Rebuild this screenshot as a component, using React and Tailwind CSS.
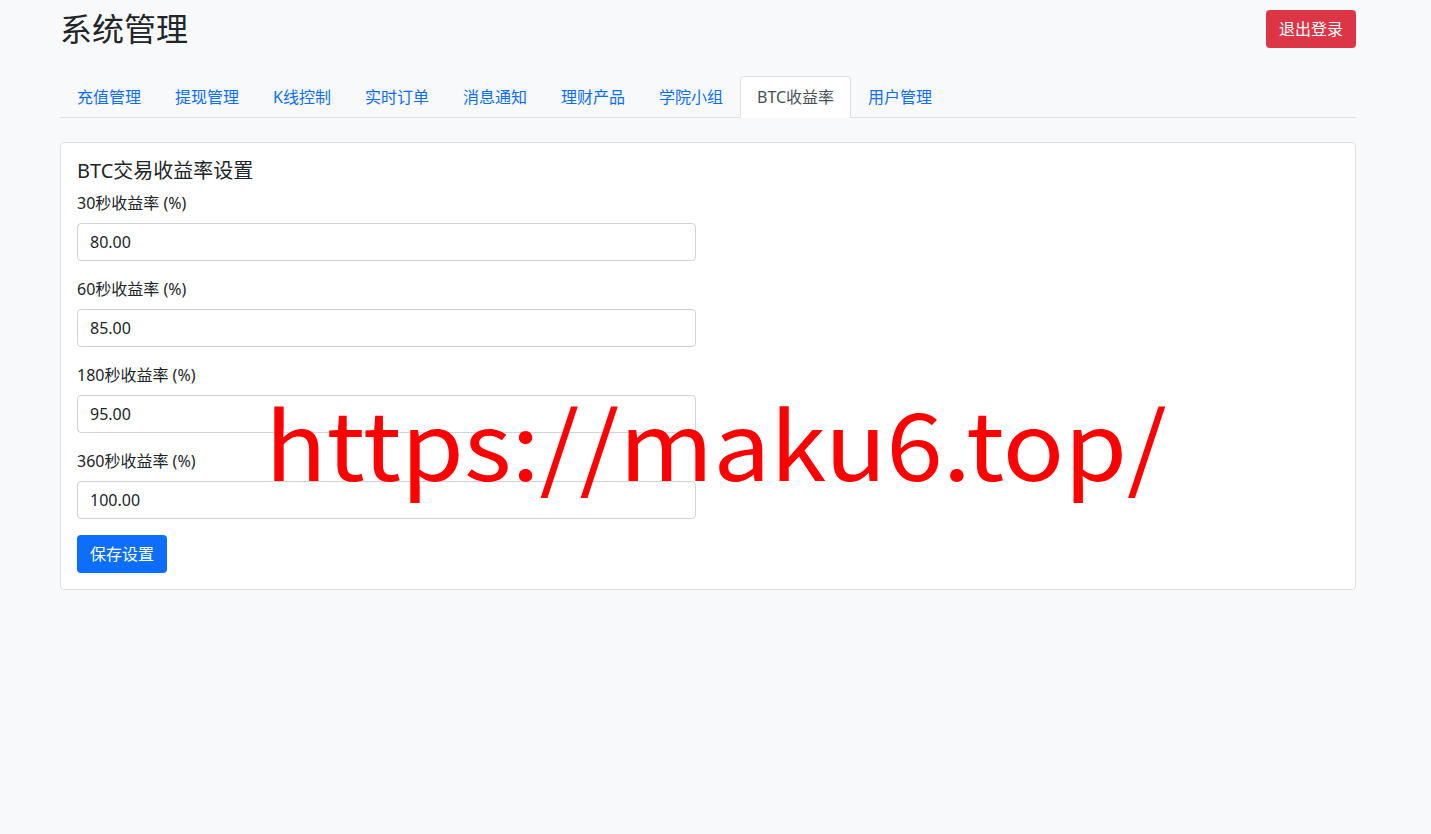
const TABS = ['充值管理', '提现管理', 'K线控制', '实时订单', '消息通知', '理财产品', '学院小组', 'BTC收益率', '用户管理'];

const RATES = [
  { label: '30秒收益率 (%)', value: '80.00' },
  { label: '60秒收益率 (%)', value: '85.00' },
  { label: '180秒收益率 (%)', value: '95.00' },
  { label: '360秒收益率 (%)', value: '100.00' },
];

export default function App() {
  const active = 'BTC收益率';

  return (
    <div className="relative min-h-screen bg-[#f8f9fa] text-[#212529] font-['Noto_Sans','Noto_Sans_CJK_SC',sans-serif] text-base">
      <div className="ml-[60px] w-[1296px] pt-[10px]">
        <div className="flex items-center justify-between mb-[28px]">
          <h2 className="text-[32px] leading-[38px] font-normal">系统管理</h2>
          <button className="h-[38px] px-[13px] rounded-[4px] bg-[#dc3545] text-white leading-6">退出登录</button>
        </div>

        <ul className="flex border-b border-[#dee2e6] mb-6">
          {TABS.map((t) => (
            <li key={t} className="-mb-px">
              <a
                href="#"
                className={
                  t === active
                    ? 'block px-4 py-2 leading-6 border border-[#dee2e6] border-b-white rounded-t-[4px] bg-white text-[#495057]'
                    : 'block px-4 py-2 leading-6 border border-transparent rounded-t-[4px] text-[#0d6efd]'
                }
              >
                {t}
              </a>
            </li>
          ))}
        </ul>

        <div className="bg-white border border-[#dfdfdf] rounded-[4px] p-4">
          <h5 className="text-[20px] leading-6 mb-2 font-normal">BTC交易收益率设置</h5>
          <form onSubmit={(e) => e.preventDefault()}>
            {RATES.map((r) => (
              <div key={r.label} className="mb-4">
                <label className="block mb-2 leading-6">{r.label}</label>
                <input
                  type="text"
                  defaultValue={r.value}
                  className="block w-[619px] h-[38px] px-3 leading-6 border border-[#ced4da] rounded-[4px] bg-white text-[#212529] outline-none"
                />
              </div>
            ))}
            <button type="submit" className="h-[38px] px-[13px] rounded-[4px] bg-[#0d6efd] text-white leading-6">
              保存设置
            </button>
          </form>
        </div>
      </div>

      {/* site watermark */}
      <div className="absolute left-[265px] top-[393px] origin-left scale-x-[1.08] text-[94px] leading-none text-[#ff0000] font-['Noto_Sans_CJK_SC',sans-serif] pointer-events-none whitespace-nowrap">
        https://maku6.top/
      </div>
    </div>
  );
}
